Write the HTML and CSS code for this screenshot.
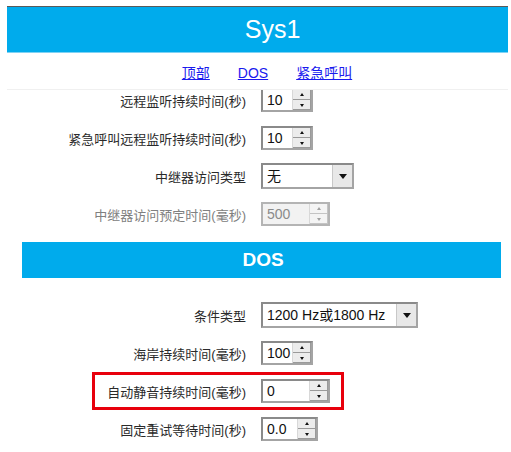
FILE: index.html
```html
<!DOCTYPE html>
<html lang="zh-CN">
<head>
<meta charset="utf-8">
<title>Sys1</title>
<link rel="stylesheet" href="styles.css">
</head>
<body>
<div class="page">
  <header class="top"><h1 class="title">Sys1</h1></header>
  <nav class="nav">
    <a href="#top">顶部</a>
    <a href="#dos">DOS</a>
    <a href="#emg">紧急呼叫</a>
  </nav>
  <div class="content">
    <div class="form first">
      <div class="row">
        <span class="label">远程监听持续时间(秒)</span>
        <span class="spin w52"><span class="val">10</span><span class="btns"><span class="up"></span><span class="dn"></span></span></span>
      </div>
      <div class="row">
        <span class="label">紧急呼叫远程监听持续时间(秒)</span>
        <span class="spin w52"><span class="val">10</span><span class="btns"><span class="up"></span><span class="dn"></span></span></span>
      </div>
      <div class="row">
        <span class="label">中继器访问类型</span>
        <span class="sel w93"><span class="val">无</span><span class="arrow"></span></span>
      </div>
      <div class="row">
        <span class="label disabled">中继器访问预定时间(毫秒)</span>
        <span class="spin w69 is-disabled"><span class="val">500</span><span class="btns"><span class="up"></span><span class="dn"></span></span></span>
      </div>
    </div>
    <section class="sec" id="dos"><h2 class="sec-title">DOS</h2></section>
    <div class="form">
      <div class="row">
        <span class="label">条件类型</span>
        <span class="sel w157"><span class="val">1200 Hz或1800 Hz</span><span class="arrow"></span></span>
      </div>
      <div class="row">
        <span class="label">海岸持续时间(毫秒)</span>
        <span class="spin w52"><span class="val">100</span><span class="btns"><span class="up"></span><span class="dn"></span></span></span>
      </div>
      <div class="row highlight">
        <span class="label">自动静音持续时间(毫秒)</span>
        <span class="spin w69"><span class="val">0</span><span class="btns"><span class="up"></span><span class="dn"></span></span></span>
      </div>
      <div class="row">
        <span class="label">固定重试等待时间(秒)</span>
        <span class="spin w57"><span class="val">0.0</span><span class="btns"><span class="up"></span><span class="dn"></span></span></span>
      </div>
    </div>
  </div>
</div>
</body>
</html>
```
FILE: styles.css
```css
html, body {
  margin: 0;
  padding: 0;
  background: #fff;
}
body {
  font-family: "Liberation Sans", "Noto Sans CJK SC", sans-serif;
  color: #222;
}
.page {
  padding: 6px 3px 0 7px;
}
.top {
  border-top: 1px solid #5a5a5a;
  border-bottom: 1px solid #7fd2f4;
  background: #00abec;
  height: 45px;
}
.title {
  margin: 0;
  padding-left: 30px;
  text-align: center;
  font-weight: normal;
  font-size: 25px;
  line-height: 45px;
  color: #fff;
}
.nav {
  height: 32px;
  padding: 4px 0 0 19px;
  border-bottom: 1px solid #f0f0f0;
  display: flex;
  justify-content: center;
  align-items: center;
  gap: 28px;
  font-size: 14px;
}
.nav a {
  color: #1a1aee;
  text-decoration: underline;
  line-height: 32px;
}
.content {
  height: 362px;
  overflow: hidden;
}
.form.first {
  margin-top: -9px;
}
.row {
  position: relative;
  height: 38px;
  display: grid;
  grid-template-columns: 239px auto;
  column-gap: 15px;
  align-items: center;
  justify-items: start;
}
.label {
  justify-self: end;
  font-size: 13px;
  color: #2a2a2a;
  white-space: nowrap;
}
.label.disabled {
  color: #808080;
}
.highlight::after {
  content: "";
  position: absolute;
  left: 85px;
  top: 0;
  width: 252px;
  height: 38px;
  box-sizing: border-box;
  border: 3px solid #e8000c;
}
.spin, .sel {
  box-sizing: border-box;
  display: flex;
  height: 24px;
  border: 2px solid #8a8a8a;
  border-right-color: #a4a4a4;
  border-bottom-color: #a4a4a4;
  background: #fff;
}
.sel {
  height: 26px;
}
.w52 { width: 52px; }
.w57 { width: 57px; }
.w69 { width: 69px; }
.w93 { width: 93px; }
.w157 { width: 157px; }
.val {
  flex: 1;
  padding-left: 4px;
  font-size: 14px;
  line-height: 20px;
  color: #111;
  white-space: nowrap;
  overflow: hidden;
}
.sel .val {
  line-height: 22px;
}
.btns {
  width: 18px;
  display: flex;
  flex-direction: column;
  border-left: 1px solid #d8d8d8;
}
.btns span {
  flex: 1;
  position: relative;
  background: #ececec;
  border-right: 1px solid #9a9a9a;
  border-bottom: 1px solid #9a9a9a;
}
.btns .up::before,
.btns .dn::before {
  content: "";
  position: absolute;
  left: 50%;
  top: 50%;
  margin-left: -2px;
  border-left: 2px solid transparent;
  border-right: 2px solid transparent;
}
.btns .up::before {
  margin-top: -2px;
  border-bottom: 3px solid #111;
}
.btns .dn::before {
  margin-top: -1px;
  border-top: 3px solid #111;
}
.is-disabled {
  border-color: #b4b4b4;
  background: #f2f2f2;
}
.is-disabled .val {
  color: #8a8a8a;
}
.is-disabled .btns span {
  background: #f4f4f4;
  border-color: #c4c4c4;
}
.is-disabled .btns .up::before { border-bottom-color: #a0a0a0; }
.is-disabled .btns .dn::before { border-top-color: #a0a0a0; }
.arrow {
  width: 19px;
  position: relative;
  background: #e8e8e8;
  border-left: 1px solid #c8c8c8;
}
.arrow::before {
  content: "";
  position: absolute;
  left: 50%;
  top: 50%;
  margin-left: -4px;
  margin-top: -2px;
  border-left: 4px solid transparent;
  border-right: 4px solid transparent;
  border-top: 5px solid #111;
}
.sec {
  margin: 9px 7px 18px 15px;
  height: 36px;
  background: #00abec;
}
.sec-title {
  margin: 0;
  padding-left: 3px;
  text-align: center;
  font-size: 19px;
  font-weight: bold;
  line-height: 36px;
  color: #fff;
}
```
